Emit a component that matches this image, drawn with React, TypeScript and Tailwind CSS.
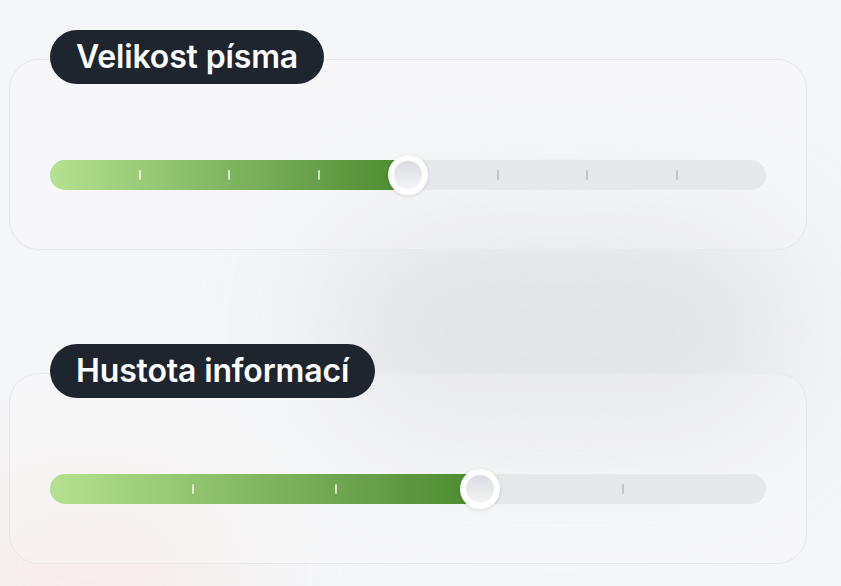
import React from 'react'

type SliderProps = {
  label: string
  steps: number
  value: number
}

function StepSlider({ label, steps, value }: SliderProps) {
  const pct = (value / steps) * 100
  const ticks = Array.from({ length: steps - 1 }, (_, i) => i + 1)

  return (
    <section className="relative ml-[9px] mr-[34px] rounded-[30px] border border-[#e6e8ec] bg-white/20 px-10 pb-[59px] pt-[100px]">
      <div className="absolute left-[40px] top-[-30px] flex h-[54px] items-center rounded-full bg-[#1e252f] px-[26px]">
        <span className="text-[32px] font-semibold leading-none tracking-[-0.15px] text-white">{label}</span>
      </div>

      <div className="relative h-[30px] rounded-full bg-[#e7e8ec]">
        <div
          className="absolute inset-y-0 left-0 rounded-l-full bg-gradient-to-r from-[#b6e28f] to-[#4b8a2f]"
          style={{ width: `${pct}%` }}
        />
        {ticks.map(t => (
          <span
            key={t}
            className={
              'absolute top-1/2 h-[10px] w-[2px] -translate-x-1/2 -translate-y-1/2 rounded-full ' +
              (t < value ? 'bg-white/70' : 'bg-[#c2c5cc]')
            }
            style={{ left: `${(t / steps) * 100}%` }}
          />
        ))}
        <div
          className="absolute top-1/2 flex h-[40px] w-[40px] -translate-x-1/2 -translate-y-1/2 items-center justify-center rounded-full bg-white shadow-[0_1px_4px_rgba(0,0,0,0.12)]"
          style={{ left: `${pct}%` }}
        >
          <div className="h-[28px] w-[28px] rounded-full bg-gradient-to-b from-[#d9dce1] to-[#f3f4f6]" />
        </div>
      </div>
    </section>
  )
}

export default function App() {
  return (
    <div
      className="relative h-[586px] w-full overflow-hidden bg-[#f5f6f8] pt-[59px] [font-family:Inter,'Noto_Sans',sans-serif]"
    >
      <div className="pointer-events-none absolute left-[320px] top-[210px] h-[240px] w-[480px] rounded-full bg-[#dcdde2] opacity-70 blur-[60px]" />
      <div className="pointer-events-none absolute bottom-[-80px] left-[-60px] h-[200px] w-[300px] rounded-full bg-[#f6ece9] opacity-80 blur-[50px]" />
      <div className="relative flex flex-col gap-[123px]">
        <StepSlider label="Velikost písma" steps={8} value={4} />
        <StepSlider label="Hustota informací" steps={5} value={3} />
      </div>
    </div>
  )
}
